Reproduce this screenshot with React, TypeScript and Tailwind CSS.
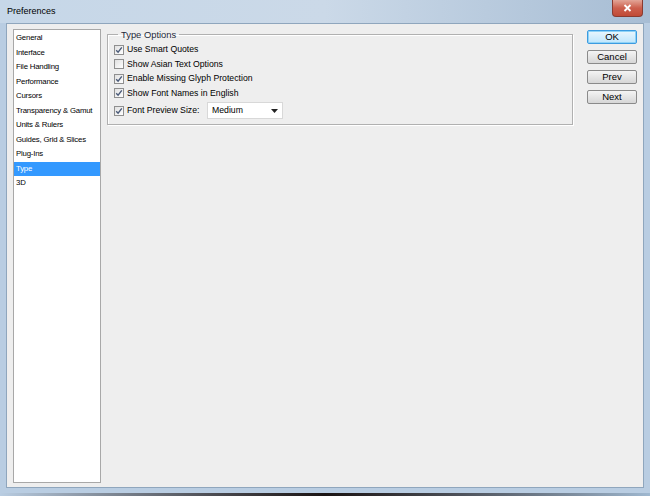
const items = [
  "General",
  "Interface",
  "File Handling",
  "Performance",
  "Cursors",
  "Transparency & Gamut",
  "Units & Rulers",
  "Guides, Grid & Slices",
  "Plug-Ins",
  "Type",
  "3D",
]

const options = [
  { label: "Use Smart Quotes", checked: true },
  { label: "Show Asian Text Options", checked: false },
  { label: "Enable Missing Glyph Protection", checked: true },
  { label: "Show Font Names in English", checked: true },
]

const sans = { fontFamily: "'Liberation Sans', Arial, sans-serif" }

function Check({ checked }: { checked: boolean }) {
  return (
    <span className="flex h-[10px] w-[10px] shrink-0 items-center justify-center border border-[#8f8f8f] bg-gradient-to-br from-[#e0e0e0] to-[#ffffff]">
      {checked && (
        <svg width="8" height="8" viewBox="0 0 8 8">
          <path d="M1.2 4.2 L3.1 6.2 L6.8 1.4" stroke="#4a5a78" strokeWidth="1.4" fill="none" />
        </svg>
      )}
    </span>
  )
}

function Btn({ label, focused }: { label: string; focused?: boolean }) {
  return (
    <button
      className={
        "flex h-[14px] w-[50px] items-center justify-center rounded-[2px] border bg-gradient-to-b text-[9.5px] leading-none text-black " +
        (focused
          ? "border-[#3c9be0] from-[#eaf6fd] to-[#bee6fd] shadow-[inset_0_0_0_1px_#8fd3f7]"
          : "border-[#8a8a8a] from-[#f4f4f4] to-[#d6d6d6]")
      }
      style={sans}
    >
      {label}
    </button>
  )
}

export default function App() {
  return (
    <div className="flex h-[496px] w-[650px] flex-col bg-[#b9cde2]" style={sans}>
      {/* title bar */}
      <div className="flex h-[23px] items-start justify-between bg-gradient-to-r from-[#c6d7e8] via-[#cbd9e8] to-[#a7bdd4]">
        <span className="pl-[7px] pt-[7px] text-[9px] leading-none text-black">Preferences</span>
        <div className="mr-[7px] flex h-[17px] w-[31px] items-center justify-center rounded-b-[4px] border border-t-0 border-[#8a3b30] bg-gradient-to-b from-[#e2a597] via-[#cc5f4d] to-[#c04a36]">
          <svg width="9" height="8" viewBox="0 0 9 8">
            <path d="M1.5 1 L7.5 7 M7.5 1 L1.5 7" stroke="#fff" strokeWidth="1.8" />
          </svg>
        </div>
      </div>

      {/* body */}
      <div className="mx-[6px] flex flex-1 border border-[#8fa6bd] bg-[#eeeeee] pb-[4px] pl-[6px] pr-[6px] pt-[5px]">
        {/* category list */}
        <div className="flex w-[88px] flex-col border border-[#a8a8a8] bg-white pt-[1px]">
          {items.map((it) => (
            <div
              key={it}
              className={
                "flex h-[14.5px] items-center whitespace-nowrap px-[2px] text-[7.8px] tracking-[-0.2px] " +
                (it === "Type" ? "bg-[#3399ff] text-white" : "text-black")
              }
            >
              {it}
            </div>
          ))}
        </div>

        {/* options */}
        <div className="ml-[6px] w-[466px] pt-[1px]">
          <fieldset className="border border-[#b0b0b0] px-[6px] pb-[4px] shadow-[inset_1px_1px_0_#fff,1px_1px_0_#fff]">
            <legend className="ml-[4px] px-[3px] text-[9.4px] leading-none text-[#1e2a3a]">Type Options</legend>
            <div className="flex flex-col pt-[3px]">
              {options.map((o) => (
                <div key={o.label} className="flex h-[14.6px] items-center gap-[3px] whitespace-nowrap text-[8.7px] text-black">
                  <Check checked={o.checked} />
                  <span>{o.label}</span>
                </div>
              ))}
              <div className="mt-[1px] flex h-[18px] items-center whitespace-nowrap text-[8.7px] text-black">
                <Check checked />
                <span className="ml-[3px] w-[80px]">Font Preview Size:</span>
                <div className="flex h-[17px] w-[76px] items-center justify-between border border-[#d8d8d8] bg-white pl-[4px] pr-[4px]">
                  <span>Medium</span>
                  <svg width="7" height="4" viewBox="0 0 7 4">
                    <path d="M0 0 H7 L3.5 4 Z" fill="#222" />
                  </svg>
                </div>
              </div>
            </div>
          </fieldset>
        </div>

        {/* buttons */}
        <div className="ml-auto flex flex-col gap-[6px] pt-[1px]">
          <Btn label="OK" focused />
          <Btn label="Cancel" />
          <Btn label="Prev" />
          <Btn label="Next" />
        </div>
      </div>

      {/* bottom frame with background shadow */}
      <div className="h-[5px] bg-[#b9cde2]" />
      <div className="h-[3px] bg-gradient-to-r from-[#b9cde2] via-[#1a1414] to-[#9fb8d0]" />
    </div>
  )
}
